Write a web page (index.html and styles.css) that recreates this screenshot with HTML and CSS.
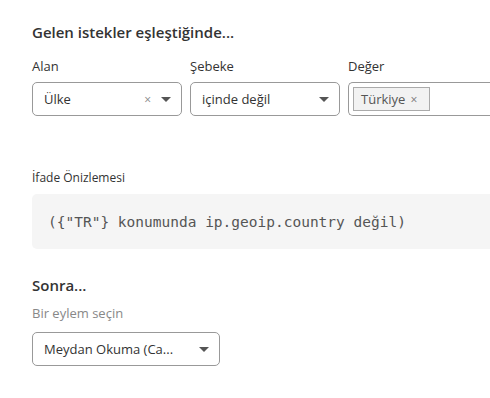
FILE: index.html
```html
<!DOCTYPE html>
<html lang="tr">

<head>
    <meta charset="UTF-8">
    <title>Kural</title>
    <link rel="stylesheet" href="styles.css">
</head>

<body>

    <div class="panel">
        <h2>Gelen istekler eşleştiğinde...</h2>

        <!-- Alan / Şebeke / Değer -->
        <div class="fields">
            <div class="field">
                <label>Alan</label>
                <div class="select">
                    <span class="value">Ülke</span>
                    <span class="clear">×</span>
                    <span class="caret"></span>
                </div>
            </div>
            <div class="field">
                <label>Şebeke</label>
                <div class="select">
                    <span class="value">içinde değil</span>
                    <span class="caret"></span>
                </div>
            </div>
            <div class="field wide">
                <label>Değer</label>
                <div class="select multi">
                    <span class="tag">Türkiye <span class="tag-x">×</span></span>
                </div>
            </div>
        </div>

        <!-- İfade önizlemesi -->
        <div class="preview">
            <label>İfade Önizlemesi</label>
            <div class="code">({"TR"} konumunda ip.geoip.country değil)</div>
        </div>

        <!-- Sonra -->
        <h2 class="then">Sonra...</h2>
        <label class="muted">Bir eylem seçin</label>
        <div class="select action">
            <span class="value">Meydan Okuma (Ca...</span>
            <span class="caret"></span>
        </div>
    </div>

</body>

</html>
```

FILE: styles.css
```css
body {
    margin: 0;
    background: #fff;
    color: #333;
    font-family: "Open Sans", "Noto Sans", sans-serif;
    overflow: hidden;
}

.panel {
    padding: 22px 0 0 32px;
}

h2 {
    font-size: 15px;
    font-weight: 600;
    margin: 0;
    line-height: 20px;
}

label {
    display: block;
    font-size: 13px;
    line-height: 18px;
}

/* Alanlar */
.fields {
    display: flex;
    gap: 8px;
    margin-top: 15px;
}

.field {
    width: 150px;
    display: flex;
    flex-direction: column;
    gap: 7px;
}

.field.wide {
    flex: 1;
    width: auto;
}

.select {
    box-sizing: border-box;
    height: 34px;
    border: 1px solid #999;
    border-radius: 5px;
    display: flex;
    align-items: center;
    padding: 0 10px 0 11px;
    font-size: 13px;
}

.select.multi {
    padding: 0 4px;
    border-right: none;
    border-radius: 5px 0 0 5px;
}

.value {
    flex: 1;
    white-space: nowrap;
}

.clear {
    color: #888;
    font-size: 12px;
    margin-right: 10px;
}

.caret {
    width: 0;
    height: 0;
    border-left: 5px solid transparent;
    border-right: 5px solid transparent;
    border-top: 5px solid #555;
}

.tag {
    box-sizing: border-box;
    height: 24px;
    width: 77px;
    display: flex;
    align-items: center;
    padding: 0 0 0 7px;
    background: #f2f2f2;
    border: 1px solid #aaa;
    font-size: 13px;
    color: #555;
}

.tag-x {
    color: #777;
    font-size: 12px;
    margin-left: 5px;
}

/* Önizleme */
.preview {
    margin-top: 53px;
}

.preview label {
    font-size: 12px;
}

.code {
    margin-top: 7px;
    height: 55px;
    display: flex;
    align-items: center;
    padding-left: 16px;
    background: #f5f5f5;
    border-radius: 5px 0 0 5px;
    font-family: "DejaVu Sans Mono", monospace;
    font-size: 14.5px;
    color: #555;
}

.then {
    margin-top: 26px;
}

.muted {
    color: #888;
    margin-top: 9px;
}

.select.action {
    width: 188px;
    margin-top: 10px;
}
```
